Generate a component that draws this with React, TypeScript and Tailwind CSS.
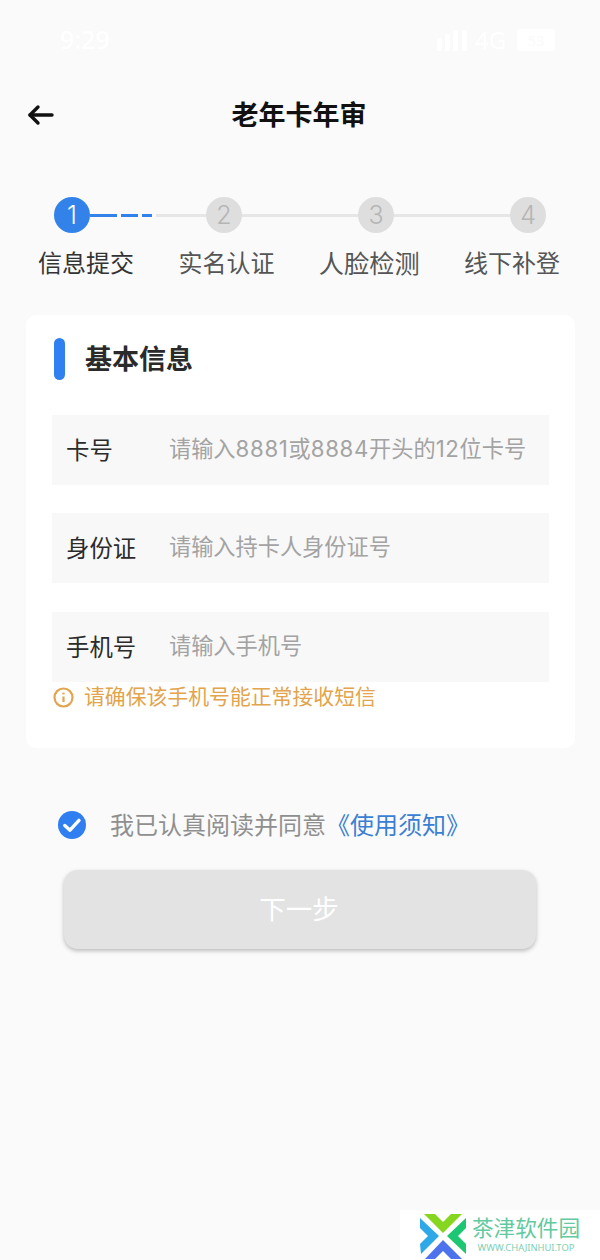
import React from "react";

const cjk = "font-['Noto_Sans','Noto_Sans_CJK_SC',sans-serif]";
const hel = "font-['Inter','Noto_Sans_CJK_SC',sans-serif]";

function Circle({ n, active }: { n: number; active?: boolean }) {
  return (
    <div
      className={
        active
          ? `flex h-9 w-9 shrink-0 items-center justify-center rounded-full bg-[#3282ea] text-[25px] leading-none font-light text-white ${hel}`
          : `flex h-9 w-9 shrink-0 items-center justify-center rounded-full bg-[#dedede] text-[25px] leading-none font-light text-[#b5b5b5] ${hel}`
      }
    >
      {n}
    </div>
  );
}

function Line() {
  return <div className="h-[3px] w-[116px] shrink-0 bg-[#e6e6e6]" />;
}

function Field({ label, children, className }: { label: string; children: React.ReactNode; className?: string }) {
  return (
    <div className={`flex h-[70px] items-center bg-[#f8f8f8] pl-[14px] ${className ?? ""}`}>
      <span className="w-[103px] shrink-0 pt-[2px] text-[23.4px] text-[#2b2b2b]">{label}</span>
      <span className={`pb-[3px] text-[22.2px] whitespace-nowrap text-[#a3a3a3] ${hel}`}>{children}</span>
    </div>
  );
}

function Digits({ children }: { children: string }) {
  return <span className="tracking-[0.7px]">{children}</span>;
}

export default function App() {
  return (
    <div className={`relative h-[1260px] w-[600px] overflow-hidden bg-[#fafafa] ${cjk}`}>
      {/* status bar, white on the light page */}
      <div className="flex h-[80px] items-center justify-between pr-[45px] pl-[60px] text-[#ffffff]">
        <span className="text-[25px] font-medium">9:29</span>
        <div className="flex items-center gap-[6px] text-[24px] leading-none">
          <svg width="32" height="22" viewBox="0 0 32 22" fill="#ffffff">
            <rect x="0" y="9" width="5" height="13" />
            <rect x="8" y="5" width="5" height="17" />
            <rect x="16" y="1" width="5" height="21" />
            <rect x="25" y="1" width="5" height="21" />
          </svg>
          <span className="w-[36px]">4G</span>
          <span className="flex h-[22px] w-[38px] items-center justify-center rounded-[3px] bg-white text-[15px] text-[#fafafa]">53</span>
        </div>
      </div>

      {/* header */}
      <div className="flex h-[70px] items-center justify-center">
        <div className="relative flex w-full items-center justify-center">
          <svg className="absolute top-[9px] left-[27px]" width="27" height="22" viewBox="0 0 27 22" fill="none" stroke="#111111" strokeWidth="3.4" strokeLinecap="round" strokeLinejoin="round">
            <path d="M25 11H3" />
            <path d="M11 3L3 11L11 19" />
          </svg>
          <h1 className="-ml-[2px] text-[27px] font-bold text-[#111111]">老年卡年审</h1>
        </div>
      </div>

      {/* progress steps */}
      <div className="mt-[47px] flex items-center pl-[54px]">
        <Circle n={1} active />
        <div className="flex w-[116px] shrink-0 items-center">
          <div className="h-[3px] w-[28px] bg-[#3282ea]" />
          <div className="ml-[4px] h-[3px] w-[18px] bg-[#3282ea]" />
          <div className="ml-[4px] h-[3px] w-[10px] bg-[#3282ea]" />
          <div className="ml-[4px] h-[3px] w-[52px] bg-[#e6e6e6]" />
        </div>
        <Circle n={2} />
        <Line />
        <Circle n={3} />
        <Line />
        <Circle n={4} />
      </div>
      <div className="mt-[12px] flex justify-between pr-[40px] pl-[38px] text-[24px] leading-[36px] text-[#555555]">
        <span className="text-[#333333]">信息提交</span>
        <span>实名认证</span>
        <span className="text-[25.2px]">人脸检测</span>
        <span>线下补登</span>
      </div>

      {/* form card */}
      <div className="mx-[26px] mt-[34px] h-[433px] w-[549px] rounded-[10px] bg-white px-[26px] pt-[23px]">
        <div className="flex items-center">
          <div className="ml-[2px] h-[42px] w-[11px] rounded-[6px] bg-[#2f80f0]" />
          <span className="ml-[20px] text-[27px] leading-[42px] font-bold text-[#2a2a2a]">基本信息</span>
        </div>
        <div className="mt-[35px] flex flex-col">
          <Field label="卡号">
            请输入<Digits>8881</Digits>或<Digits>8884</Digits>开头的<Digits>12</Digits>位卡号
          </Field>
          <Field className="mt-[28px]" label="身份证">请输入持卡人身份证号</Field>
          <Field className="mt-[29px]" label="手机号">请输入手机号</Field>
        </div>
        <div className="mt-[1px] flex h-[28px] items-center text-[20.85px] whitespace-nowrap text-[#e2a44c]">
          <svg className="ml-[1px]" width="21" height="21" viewBox="0 0 21 21" fill="none" stroke="#e2a44c" strokeWidth="2.2">
            <circle cx="10.5" cy="10.5" r="9" />
            <path d="M10.5 9.5V15" />
            <path d="M10.5 5.6V7.4" />
          </svg>
          <span className="ml-[10px]">请确保该手机号能正常接收短信</span>
        </div>
      </div>

      {/* agreement */}
      <div className="mt-[59px] flex h-[36px] items-center pl-[58px] text-[24px] whitespace-nowrap text-[#8f8f8f]">
        <svg width="28" height="28" viewBox="0 0 28 28" className="shrink-0">
          <circle cx="14" cy="14" r="14" fill="#2f7ff0" />
          <path d="M6.8 14.5L12 19.2L21 9.4" fill="none" stroke="#ffffff" strokeWidth="3.4" strokeLinecap="round" strokeLinejoin="round" />
        </svg>
        <span className="ml-[24px]">我已认真阅读并同意</span>
        <span className="text-[#3b7fd4]">《使用须知》</span>
      </div>

      {/* next button */}
      <div className="mt-[27px] ml-[64px] flex h-[79px] w-[472px] items-center justify-center rounded-[14px] bg-[#e3e3e3] pr-[2px] text-[26.5px] text-white shadow-[0_2px_4px_rgba(0,0,0,0.25)]">
        下一步
      </div>

      {/* site mark in the corner */}
      <div className="absolute right-0 bottom-0 flex h-[50px] w-[200px] items-start bg-white pl-[20px]">
        <svg width="46" height="46" viewBox="0 0 46 46" className="mt-[3px] shrink-0">
          <path d="M4 1H15L23 9L31 1H42L23 20Z" fill="#86d51f" />
          <path d="M0 5L19 23L1 41L0 31L8 23L0 15Z" fill="#2fa8e8" />
          <path d="M46 5L27 23L46 41V31L38 23L46 15Z" fill="#1cc673" />
          <path d="M23 27L42 46H31L23 38L15 46H5Z" fill="#4d72ee" />
        </svg>
        <div className="mt-[6px] ml-[6px] flex w-[108px] flex-col items-center">
          <span className="text-[21.6px] leading-[24px] whitespace-nowrap text-[#63c9a0]">茶津软件园</span>
          <span className="mt-[2px] text-[9.4px] leading-[12px] whitespace-nowrap text-[#7ecfb4]">WWW.CHAJINHUI.TOP</span>
        </div>
      </div>
    </div>
  );
}
